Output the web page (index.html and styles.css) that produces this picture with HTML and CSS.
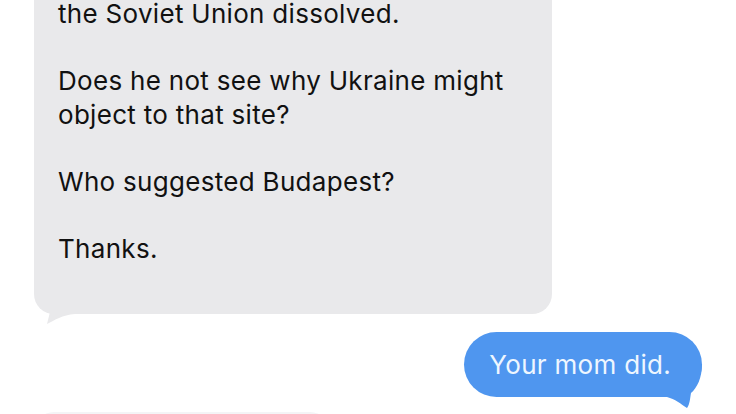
FILE: index.html
```html
<!DOCTYPE html>
<html>
<head>
<meta charset="utf-8">
<link rel="stylesheet" href="styles.css">
</head>
<body>
<div class="thread">
  <div class="msg msg-in msg-long">
    <p>the Soviet Union dissolved.</p>
    <p>Does he not see why Ukraine might<br>object to that site?</p>
    <p>Who suggested Budapest?</p>
    <p>Thanks.</p>
    <svg class="tail tail-in" width="50" height="40" viewBox="0 0 50 40"><path d="M0 0 C0 14 8 24 16 26 L13 38 C21 34 28 29 41 28 L41 0 Z"/></svg>
  </div>
  <div class="msg msg-out">
    <p>Your mom did.</p>
    <svg class="tail tail-out" width="45" height="45" viewBox="0 0 45 45"><path d="M45 0 C45 14 40 24 34 29 C33 34 33 40 30 44 C24 40 18 35 10 33 L0 33 L0 0 Z"/></svg>
  </div>
  <div class="msg msg-in msg-next"></div>
</div>
</body>
</html>
```
FILE: styles.css
```css
html, body {
  margin: 0;
  padding: 0;
  background: #ffffff;
  overflow: hidden;
}
.thread {
  width: 736px;
  height: 414px;
  overflow: hidden;
  display: flex;
  flex-direction: column;
  font-family: "Inter", "Liberation Sans", sans-serif;
  font-size: 26px;
  letter-spacing: 0.3px;
  line-height: 33.5px;
}
.msg {
  position: relative;
  box-sizing: border-box;
  flex-shrink: 0;
}
.msg p {
  position: relative;
  z-index: 1;
  margin: 0;
  white-space: nowrap;
}
.msg-in {
  align-self: flex-start;
  margin-left: 34px;
  background: #e9e9eb;
  color: #111111;
  border-radius: 20px;
}
.msg-in .tail path { fill: #e9e9eb; }
.msg-long {
  width: 518px;
  margin-top: -3px;
  padding: 0 24px 49px 24px;
  border-radius: 0 0 20px 20px;
}
.msg-long p + p {
  margin-top: 33.5px;
}
.tail {
  position: absolute;
  display: block;
}
.tail-in {
  left: 0;
  bottom: -12px;
}
.msg-out {
  align-self: flex-end;
  margin-right: 34px;
  margin-top: 18px;
  height: 65px;
  padding: 16px 31px 0 25px;
  background: #4f96ef;
  color: #eef6ff;
  border-radius: 33px;
}
.tail-out {
  right: 0;
  bottom: -12px;
}
.tail-out path { fill: #4f96ef; }
.msg-next {
  margin-top: 15px;
  width: 296px;
  height: 60px;
  background: #f4f4f6;
}
```
